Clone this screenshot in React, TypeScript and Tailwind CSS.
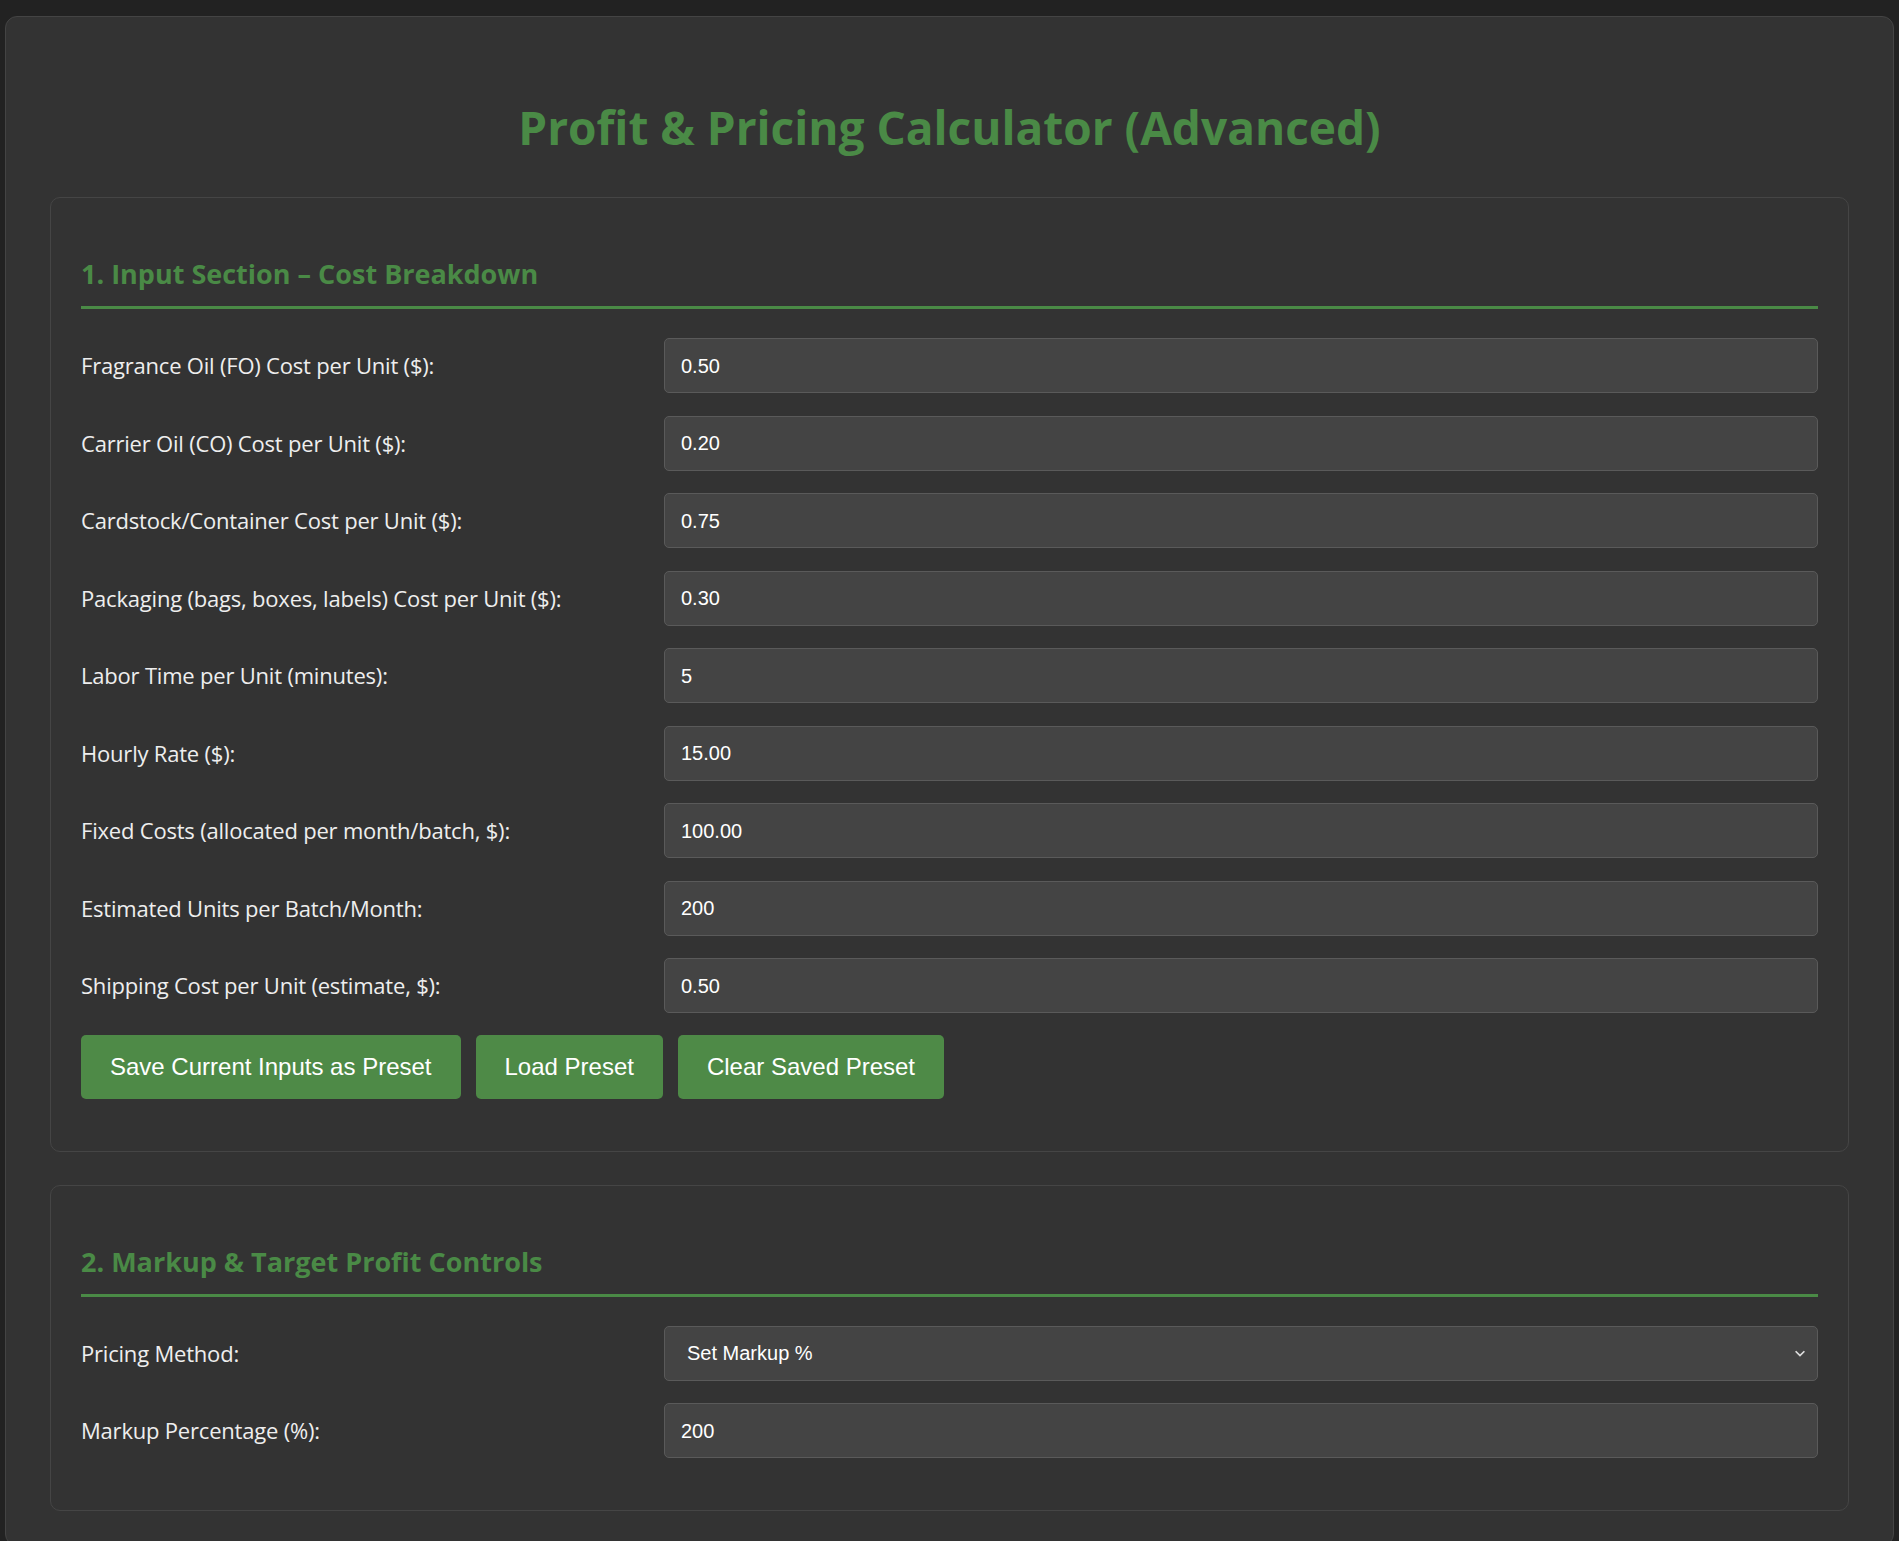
import React from "react";

const rows: [string, string][] = [
  ["Fragrance Oil (FO) Cost per Unit ($):", "0.50"],
  ["Carrier Oil (CO) Cost per Unit ($):", "0.20"],
  ["Cardstock/Container Cost per Unit ($):", "0.75"],
  ["Packaging (bags, boxes, labels) Cost per Unit ($):", "0.30"],
  ["Labor Time per Unit (minutes):", "5"],
  ["Hourly Rate ($):", "15.00"],
  ["Fixed Costs (allocated per month/batch, $):", "100.00"],
  ["Estimated Units per Batch/Month:", "200"],
  ["Shipping Cost per Unit (estimate, $):", "0.50"],
];

const font = { fontFamily: '"Open Sans", "Noto Sans", sans-serif' };

function Row({ label, value, select }: { label: string; value: string; select?: boolean }) {
  return (
    <div className="grid grid-cols-[1fr_2fr] items-center h-[77.5px]">
      <label className="text-[22px] text-[#eeeeee] tracking-[-0.2px]" style={font}>{label}</label>
      <div className="ml-[4px] h-[55px] rounded-[5px] border border-[#5a5a5a] bg-[#444444] flex items-center justify-between pl-[16px] pr-[10px] text-[20px] text-white" style={{ fontFamily: '"Liberation Sans", Arial, sans-serif' }}>
        <span className={select ? "pl-[6px]" : ""}>{value}</span>
        {select && (
          <svg width="14" height="14" viewBox="0 0 16 16" fill="none" stroke="#ddd" strokeWidth="2"><path d="M3 6l5 5 5-5" /></svg>
        )}
      </div>
    </div>
  );
}

function Heading({ children }: { children: React.ReactNode }) {
  return (
    <div className="pt-[56px] pb-[12px] mb-[18px] border-b-[3px] border-[#4a8a46]">
      <h2 className="text-[27px] font-bold text-[#4a8a46] leading-[40px]" style={font}>{children}</h2>
    </div>
  );
}

export default function App() {
  return (
    <div className="min-h-[1541px] bg-[#222222] pt-[16px] pl-[5px] pr-[5px]">
      <div className="bg-[#333333] border border-[#444444] rounded-[12px] px-[44px] pt-[80px] pb-[30px] min-h-[1530px]">
        <h1 className="text-center text-[46px] font-bold text-[#4a8a46] leading-[60px] mb-[40px]" style={font}>
          Profit &amp; Pricing Calculator (Advanced)
        </h1>
        <div className="border border-[#454545] rounded-[10px] px-[30px] pb-[52px]">
          <Heading>1. Input Section – Cost Breakdown</Heading>
          {rows.map(([l, v]) => <Row key={l} label={l} value={v} />)}
          <div className="flex gap-[15px] mt-[10px]" style={{ fontFamily: '"Liberation Sans", Arial, sans-serif' }}>
            {["Save Current Inputs as Preset", "Load Preset", "Clear Saved Preset"].map((b) => (
              <button key={b} className="bg-[#4e8a47] text-white text-[24px] h-[64px] px-[29px] rounded-[5px]">{b}</button>
            ))}
          </div>
        </div>
        <div className="border border-[#454545] rounded-[10px] px-[30px] pb-[40px] mt-[33px]">
          <Heading>2. Markup &amp; Target Profit Controls</Heading>
          <Row label="Pricing Method:" value="Set Markup %" select />
          <Row label="Markup Percentage (%):" value="200" />
        </div>
      </div>
    </div>
  );
}
